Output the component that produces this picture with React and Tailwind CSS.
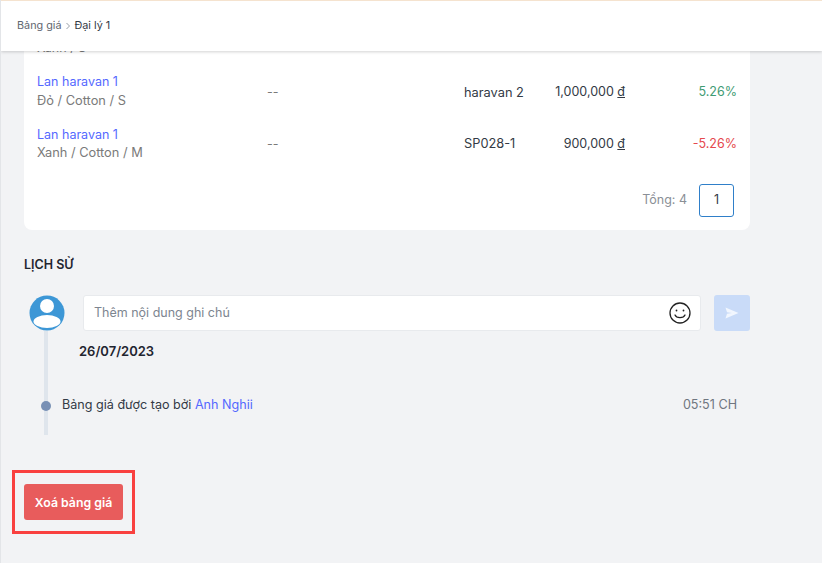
import React from "react";

function Row({ name, variant, sku, price, pct, pctClass, rowClass, lineGap, cellPad }) {
  return (
    <div className={`flex items-center pl-[13px] pr-[13px] ${rowClass}`}>
      <div className={`w-[230px] flex flex-col leading-[18px] ${lineGap}`}>
        <span className="text-[#5468ff]">{name}</span>
        <span className="text-[#7a7a7a] text-[12.8px]">{variant}</span>
      </div>
      <div className={`w-[197px] text-[#7a7a7a] ${cellPad}`}>--</div>
      <div className={`w-[80px] text-[#333a45] text-[12.8px] ${cellPad}`}>{sku}</div>
      <div className={`w-[81px] text-right text-[#333a45] whitespace-nowrap ${cellPad}`}>
        {price} <span className="underline">đ</span>
      </div>
      <div className={`flex-1 text-right whitespace-nowrap ${cellPad}`}>
        <span className={pctClass}>{pct}</span>
      </div>
    </div>
  );
}

export default function App() {
  return (
    <div
      className="relative w-[822px] h-[563px] overflow-hidden bg-[#f2f3f5] border-l border-l-[#e3e5e8] text-[12.5px]"
      style={{ fontFamily: "Inter, 'Noto Sans', sans-serif" }}
    >
      <header className="relative z-10 h-[51px] bg-white border-t border-t-[#f5e3cf] shadow-[0_1px_3px_rgba(0,0,0,0.18)] flex items-center pl-[16px] text-[10.8px]">
        <span className="text-[#5f6670]">Bảng giá</span>
        <svg width="10" height="12" viewBox="0 0 10 12" className="ml-[2px] mr-[1px]" fill="none" stroke="#9aa0a8" strokeWidth="1">
          <path d="M3.5 3 L6.5 6 L3.5 9" />
        </svg>
        <span className="text-[#333a45]">Đại lý 1</span>
      </header>

      <main className="pl-[23px] w-[749px]">
        <section className="bg-white rounded-b-lg -mt-[19px] h-[198px] flex flex-col">
          <div className="pl-[13px] text-[#7a7a7a] leading-[18px] h-[33px] pt-[7px]">Xanh / S</div>
          <Row name="Lan haravan 1" variant="Đỏ / Cotton / S" sku="haravan 2" price="1,000,000" pct="5.26%" pctClass="text-[#3f9c74]" rowClass="h-[53px]" lineGap="gap-[1px]" cellPad="pt-[2px]" />
          <Row name="Lan haravan 1" variant="Xanh / Cotton / M" sku="SP028-1" price="900,000" pct="-5.26%" pctClass="text-[#e5484d]" rowClass="h-[52px]" lineGap="gap-0" cellPad="pt-0" />
          <div className="flex items-center justify-end gap-[12px] pr-[16px] mt-[14px]">
            <span className="text-[#8a8f96]">Tổng: 4</span>
            <span className="w-[35px] h-[33px] border border-[#2f7fc9] rounded-[3px] flex items-center justify-center text-[#333a45]">1</span>
          </div>
        </section>

        <h2 className="mt-[27px] text-[12.5px] font-semibold leading-[16px] text-[#1f2530]">LỊCH SỬ</h2>

        <div className="relative mt-[22px] w-[726px]">
          <div className="flex items-start">
            <svg width="36" height="36" viewBox="0 0 36 36" className="ml-[5px] shrink-0 relative z-10">
              <defs>
                <clipPath id="avatarClip"><circle cx="18" cy="18" r="17.5" /></clipPath>
              </defs>
              <circle cx="18" cy="18" r="17.5" fill="#3d97d6" />
              <g clipPath="url(#avatarClip)">
                <circle cx="18" cy="11" r="7" fill="#fff" />
                <ellipse cx="18" cy="26.5" rx="13.5" ry="6.5" fill="#fff" />
              </g>
            </svg>
            <div className="ml-[18px] w-[618px] h-[36px] bg-white border border-[#e8eaed] rounded-[3px] flex items-center justify-between pl-[10px] pr-[9px]">
              <span className="text-[#7d8590]">Thêm nội dung ghi chú</span>
              <svg width="22" height="22" viewBox="0 0 22 22" fill="none" stroke="#222" strokeWidth="1.3" strokeLinecap="round">
                <circle cx="11" cy="11" r="10" />
                <circle cx="7.5" cy="8.5" r="0.9" fill="#222" stroke="none" />
                <circle cx="14.5" cy="8.5" r="0.9" fill="#222" stroke="none" />
                <path d="M6 13 C7.5 16.5 14.5 16.5 16 13" />
              </svg>
            </div>
            <button className="ml-[13px] w-[36px] h-[36px] rounded-[3px] bg-[#c9dbf8] flex items-center justify-center">
              <svg width="14" height="12" viewBox="0 0 14 12" fill="#f1f6fe">
                <path d="M0.5 0.5 L13.5 6 L0.5 11.5 L2 6.8 L7 6 L2 5.2 Z" />
              </svg>
            </button>
          </div>

          <div className="absolute left-[20px] top-[36px] w-[4px] h-[104px] bg-[#dfe5ec]" />

          <div className="ml-[55px] mt-[11px] text-[13px] font-semibold leading-[18px] text-[#1f2530]">26/07/2023</div>

          <div className="relative flex items-center justify-between mt-[36px] pl-[38px] pr-[13px] leading-[18px] text-[12.6px]">
            <span className="absolute left-[17px] top-[5px] w-[10px] h-[10px] rounded-full bg-[#7890b5]" />
            <span className="text-[#333a45]">Bảng giá được tạo bởi <span className="text-[#5468ff]">Anh Nghii</span></span>
            <span className="text-[#6f7680]">05:51 CH</span>
          </div>
        </div>
      </main>

      <div className="absolute left-[11px] top-[470px] w-[123px] h-[64px] border-[3px] border-[#f9403f] flex items-center justify-center">
        <button className="w-[99px] h-[36px] rounded-[3px] bg-[#e85c5c] text-white font-semibold text-[12.3px] pt-[2px]">Xoá bảng giá</button>
      </div>
    </div>
  );
}
